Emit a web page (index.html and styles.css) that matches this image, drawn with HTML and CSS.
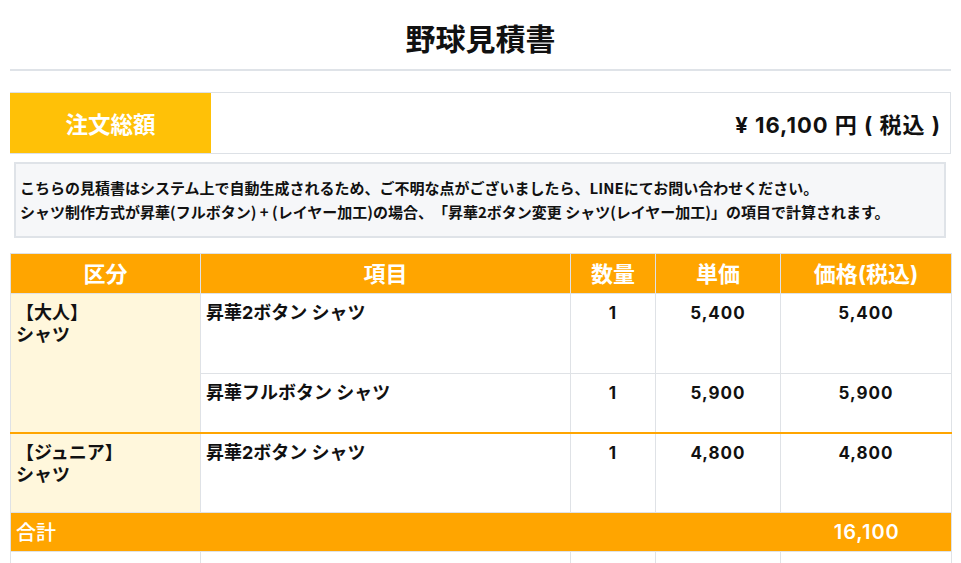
FILE: index.html
```html
<!DOCTYPE html>
<html lang="ja">
<head>
<meta charset="utf-8">
<title>野球見積書</title>
<link rel="stylesheet" href="styles.css">
</head>
<body>
<div class="page">
  <header class="head">
    <h1 class="title">野球見積書</h1>
  </header>

  <section class="total-box">
    <div class="total-label">注文総額</div>
    <div class="total-value">¥ 16,100 円 ( 税込 )</div>
  </section>

  <section class="notice">
    <p>こちらの見積書はシステム上で自動生成されるため、ご不明な点がございましたら、LINEにてお問い合わせください。</p>
    <p>シャツ制作方式が昇華(フルボタン) + (レイヤー加工)の場合、「昇華2ボタン変更 シャツ(レイヤー加工)」の項目で計算されます。</p>
  </section>

  <table class="quote">
    <colgroup>
      <col class="c1"><col class="c2"><col class="c3"><col class="c4"><col class="c5">
    </colgroup>
    <thead>
      <tr>
        <th>区分</th><th>項目</th><th>数量</th><th>単価</th><th>価格(税込)</th>
      </tr>
    </thead>
    <tbody>
      <tr class="r-tall">
        <td class="cat" rowspan="2">&#12304;大人&#12305;<br>シャツ</td>
        <td class="item">昇華2ボタン シャツ</td>
        <td class="num">1</td>
        <td class="num">5,400</td>
        <td class="num">5,400</td>
      </tr>
      <tr class="r-short">
        <td class="item">昇華フルボタン シャツ</td>
        <td class="num">1</td>
        <td class="num">5,900</td>
        <td class="num">5,900</td>
      </tr>
      <tr class="r-tall group">
        <td class="cat">&#12304;ジュニア&#12305;<br>シャツ</td>
        <td class="item">昇華2ボタン シャツ</td>
        <td class="num">1</td>
        <td class="num">4,800</td>
        <td class="num">4,800</td>
      </tr>
      <tr class="sum">
        <td colspan="4" class="sum-label">合計</td>
        <td class="sum-value">16,100</td>
      </tr>
      <tr class="r-empty">
        <td></td><td></td><td></td><td></td><td></td>
      </tr>
    </tbody>
  </table>
</div>
</body>
</html>
```

FILE: styles.css
```css
* { box-sizing: border-box; }

html, body {
  margin: 0;
  padding: 0;
  background: #ffffff;
  color: #111111;
  font-family: "Inter", "Noto Sans CJK JP", sans-serif;
}

.page {
  padding: 0 10px;
}

.head {
  border-bottom: 2px solid #dfe3e8;
  padding: 16px 0 11px;
}

.title {
  margin: 0;
  text-align: center;
  font-family: "Noto Sans CJK JP", sans-serif;
  font-size: 30px;
  line-height: 42px;
  font-weight: 700;
  color: #111;
}

.total-box {
  margin-top: 21px;
  display: flex;
  height: 62px;
  border: 1px solid #dde1e6;
  border-left: none;
}

.total-label {
  width: 201px;
  background: #ffc107;
  color: #ffffff;
  font-family: "Noto Sans CJK JP", sans-serif;
  font-size: 22.5px;
  font-weight: 700;
  display: flex;
  align-items: center;
  justify-content: center;
}

.total-value {
  flex: 1;
  display: flex;
  align-items: center;
  justify-content: flex-end;
  padding-right: 9px;
  font-size: 22px;
  letter-spacing: 1px;
  font-weight: 700;
}

.notice {
  margin: 8px 5px 0 4px;
  background: #f6f7f9;
  border: 2px solid #dfe3e8;
  padding: 12px 4px;
}

.notice p {
  margin: 0;
  font-family: "Noto Sans CJK JP", sans-serif;
  font-size: 15px;
  line-height: 24px;
  font-weight: 700;
  color: #111;
  white-space: nowrap;
  text-spacing-trim: space-all;
}

.quote {
  margin-top: 15px;
  width: 100%;
  border-collapse: collapse;
  table-layout: fixed;
}

.c1 { width: 190px; }
.c2 { width: 370px; }
.c3 { width: 85px; }
.c4 { width: 125px; }
.c5 { width: 171px; }

.quote th,
.quote td {
  border: 1px solid #dfe2e6;
  padding: 0;
}

.quote th {
  background: #ffa500;
  color: #ffffff;
  font-family: "Inter", "Noto Sans CJK JP", sans-serif;
  font-size: 22px;
  font-weight: 700;
  height: 40px;
  text-align: center;
  vertical-align: middle;
  line-height: 1;
}

.quote td {
  vertical-align: top;
  font-size: 18px;
  font-weight: 700;
  line-height: 22px;
  padding-top: 8px;
}

.quote .r-tall td { height: 80px; }
.quote .r-short td { height: 59px; }

.quote td.cat {
  background: #fff7dc;
  padding-left: 5px;
}

.quote td.item {
  padding-left: 5px;
}

.quote td.num {
  text-align: center;
  font-size: 17px;
  letter-spacing: 1px;
}

.quote .group td {
  border-top: 2px solid #ffa500;
}

.quote .sum td {
  background: #ffa500;
  color: #ffffff;
  height: 39px;
  vertical-align: middle;
  padding-top: 0;
  border-left: none;
  border-right: none;
}

.quote .sum td:first-child { border-left: 1px solid #dfe2e6; }
.quote .sum td:last-child { border-right: 1px solid #dfe2e6; }

.quote td.sum-label {
  font-family: "Noto Sans CJK JP", sans-serif;
  font-size: 20px;
  font-weight: 500;
  padding-left: 5px;
}

.quote td.sum-value {
  text-align: center;
  font-size: 20px;
  font-weight: 600;
  letter-spacing: 1px;
  padding-left: 2px;
}

.quote .r-empty td { height: 40px; }
```
